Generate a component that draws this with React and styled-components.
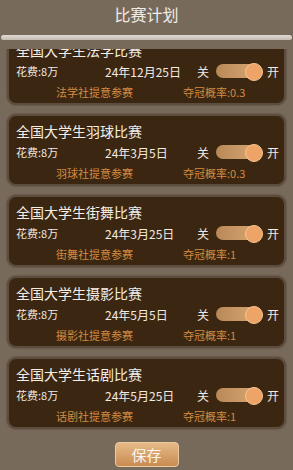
import React, { useEffect, useRef } from 'react';
import styled, { createGlobalStyle } from 'styled-components';

const GlobalStyle = createGlobalStyle`
  html, body {
    margin: 0;
    padding: 0;
    background: #786a5b;
  }
  body {
    font-family: "Noto Sans CJK SC", "Noto Sans", sans-serif;
  }
`

const Page = styled.div`
width: 293px;
height: 470px;
background: #786a5b;
display: flex;
flex-direction: column;
overflow: hidden;
`

const Header = styled.div`
height: 35px;
display: flex;
align-items: center;
justify-content: center;
color: #f1ece6;
font-size: 16px;
padding-bottom: 7px;
box-sizing: border-box;
`

const Divider = styled.div`
height: 5px;
margin: 0 1px;
border-radius: 3px;
background: linear-gradient(#e0dad3, #c4bcb2);
`

const Scroller = styled.div`
margin-top: 9px;
height: 386px;
overflow: hidden;
`

const List = styled.div`
display: flex;
flex-direction: column;
gap: 9px;
padding: 0 7px 40px;
`

const Card = styled.div`
height: 72px;
box-sizing: border-box;
background: #3b2611;
border: 2px solid #5d4d3e;
border-radius: 9px;
box-shadow: 0 0 2px rgba(40, 28, 16, 0.6);
padding: 3px 7px 0;
display: flex;
flex-direction: column;
`

const Title = styled.div`
color: #f4eee6;
font-size: 14px;
line-height: 24px;
`

const InfoRow = styled.div`
display: grid;
grid-template-columns: 89px 92px 19px 51px auto;
align-items: center;
height: 19px;
color: #f1ebe3;
`

const Cost = styled.span`
font-size: 11px;
`

const Date = styled.span`
font-size: 12px;
`

const Label = styled.span`
font-size: 12px;
`

const Toggle = styled.div`
position: relative;
width: 47px;
height: 17px;
display: flex;
align-items: center;
`

const Track = styled.div`
width: 42px;
height: 14px;
border-radius: 7px;
background: linear-gradient(90deg, #b88858, #d8a772);
`

const Thumb = styled.div`
position: absolute;
right: 0;
top: 0;
width: 16px;
height: 16px;
border-radius: 50%;
background: #efa467;
border: 1px solid #f6c593;
box-sizing: content-box;
`

const FooterRow = styled.div`
display: grid;
grid-template-columns: 127px auto;
padding-left: 40px;
height: 24px;
align-items: center;
color: #d38b43;
font-size: 11px;
`

const Bottom = styled.div`
flex: 1;
display: flex;
justify-content: center;
padding-top: 7px;
`

const SaveButton = styled.button`
width: 64px;
height: 25px;
border: 1px solid #eccaa0;
border-radius: 4px;
background: linear-gradient(#e6b987, #c98c52);
color: #fbf5ee;
font-family: inherit;
font-size: 15px;
padding: 0;
line-height: 23px;
`

const contests = [
  { name: '全国大学生法学比赛', date: '24年12月25日', club: '法学社提意参赛', rate: '0.3' },
  { name: '全国大学生羽球比赛', date: '24年3月5日', club: '羽球社提意参赛', rate: '0.3' },
  { name: '全国大学生街舞比赛', date: '24年3月25日', club: '街舞社提意参赛', rate: '1' },
  { name: '全国大学生摄影比赛', date: '24年5月5日', club: '摄影社提意参赛', rate: '1' },
  { name: '全国大学生话剧比赛', date: '24年5月25日', club: '话剧社提意参赛', rate: '1' },
]

function ContestCard({ item }) {
  return (
    <Card>
      <Title>{item.name}</Title>
      <InfoRow>
        <Cost>花费:8万</Cost>
        <Date>{item.date}</Date>
        <Label>关</Label>
        <Toggle>
          <Track />
          <Thumb />
        </Toggle>
        <Label>开</Label>
      </InfoRow>
      <FooterRow>
        <span>{item.club}</span>
        <span>夺冠概率:{item.rate}</span>
      </FooterRow>
    </Card>
  )
}

export default function App() {
  const scroller = useRef(null)

  useEffect(() => {
    // the list is shown a little scrolled, first card half hidden
    if (scroller.current) scroller.current.scrollTop = 16
  }, [])

  return (
    <Page>
      <GlobalStyle />
      <Header>比赛计划</Header>
      <Divider />
      <Scroller ref={scroller}>
        <List>
          {contests.map(c => <ContestCard key={c.name} item={c} />)}
        </List>
      </Scroller>
      <Bottom>
        <SaveButton type="button">保存</SaveButton>
      </Bottom>
    </Page>
  )
}
